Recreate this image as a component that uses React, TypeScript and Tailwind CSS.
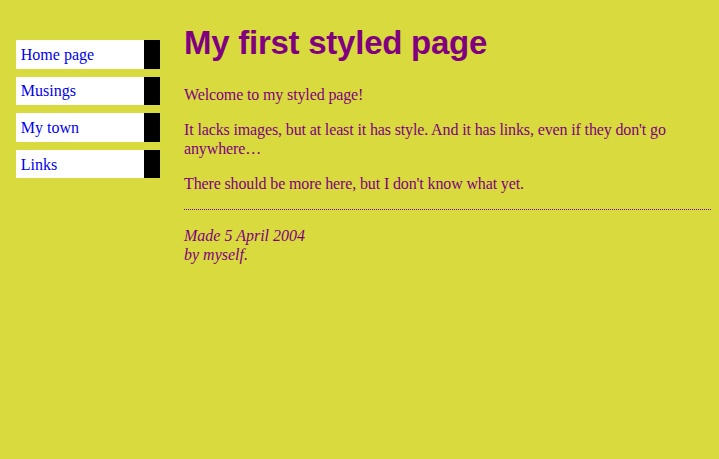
const links = ["Home page", "Musings", "My town", "Links"];

export default function App() {
  return (
    <div className="flex min-h-[459px] bg-[#d8da3d] font-['Liberation_Serif',serif] text-[16px] text-[#800080]">
      <ul className="flex w-[184px] shrink-0 flex-col gap-[8px] pt-[40px] pl-[16px]">
        {links.map((l) => (
          <li
            key={l}
            className="w-[144px] border-r-[16px] border-black bg-white px-[4.8px] py-[4.8px] leading-[19px]"
          >
            <a href="#" className="text-[#0000ee]">
              {l}
            </a>
          </li>
        ))}
      </ul>
      <main className="flex-1 pr-[8px] pt-[24px]">
        <h1 className="font-['Liberation_Sans',Arial,sans-serif] text-[33px] font-bold leading-[37px] tracking-[-0.25px]">
          My first styled page
        </h1>
        <div className="mt-[24px] flex flex-col gap-[16px] leading-[19px] tracking-[-0.13px]">
          <p>Welcome to my styled page!</p>
          <p>
            It lacks images, but at least it has style. And it has links, even if they don't go
            anywhere…
          </p>
          <p>There should be more here, but I don't know what yet.</p>
        </div>
        <address className="mt-[16px] border-t border-dotted border-[#800080] pt-[16px] italic leading-[19px]">
          Made 5 April 2004
          <br />
          by myself.
        </address>
      </main>
    </div>
  );
}
